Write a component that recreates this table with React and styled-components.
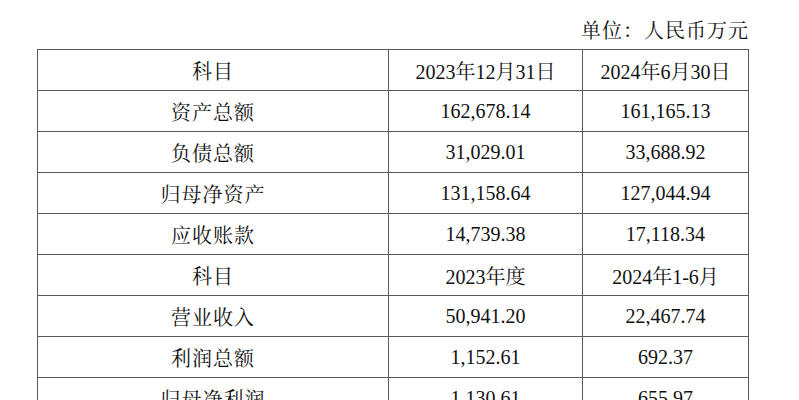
import styled, { createGlobalStyle } from "styled-components";

const GlobalStyle = createGlobalStyle`
	body {
		margin: 0;
		background: #fff;
		color: #111;
		font-family: "Liberation Serif", "Noto Serif CJK SC", "Noto Sans CJK SC", serif;
	}
`;

const Page = styled.div`
	display: flex;
	flex-direction: column;
	align-items: flex-end;
	padding: 13px 50px 0 38px;
	width: 799px;
	height: 400px;
	box-sizing: border-box;
	overflow: hidden;
`;

const Unit = styled.div`
	font-size: 20px;
	line-height: 36px;
	height: 36px;
	letter-spacing: 1px;
`;

const Table = styled.table`
	border-collapse: collapse;
	width: 711px;
	table-layout: fixed;
`;

const Cell = styled.td`
	border: 1.5px solid #5a5a5a;
	height: 40px;
	padding: 0;
	text-align: center;
	vertical-align: middle;
	font-size: 20px;
	letter-spacing: ${({ $cn }) => ($cn ? "1px" : "0")};
`;

const rows = [
	["科目", "2023年12月31日", "2024年6月30日"],
	["资产总额", "162,678.14", "161,165.13"],
	["负债总额", "31,029.01", "33,688.92"],
	["归母净资产", "131,158.64", "127,044.94"],
	["应收账款", "14,739.38", "17,118.34"],
	["科目", "2023年度", "2024年1-6月"],
	["营业收入", "50,941.20", "22,467.74"],
	["利润总额", "1,152.61", "692.37"],
	["归母净利润", "1,130.61", "655.97"],
];

const App = () => (
	<>
		<GlobalStyle />
		<Page>
			<Unit>单位：人民币万元</Unit>
			<Table>
				<colgroup>
					<col style={{ width: "351px" }} />
					<col style={{ width: "194px" }} />
					<col style={{ width: "166px" }} />
				</colgroup>
				<tbody>
					{rows.map((r, i) => (
						<tr key={i}>
							<Cell $cn>{r[0]}</Cell>
							<Cell>{r[1]}</Cell>
							<Cell>{r[2]}</Cell>
						</tr>
					))}
				</tbody>
			</Table>
		</Page>
	</>
);

export default App;
